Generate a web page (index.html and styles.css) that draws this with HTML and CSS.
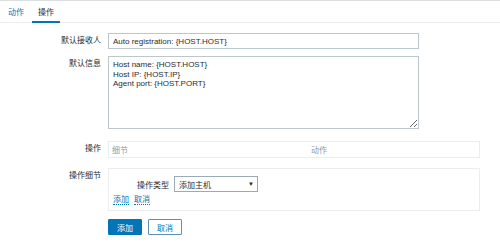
FILE: index.html
```html
<!DOCTYPE html>
<html lang="zh-CN">
<head>
  <meta charset="UTF-8" />
  <meta name="viewport" content="width=device-width, initial-scale=1.0" />
  <title>操作</title>
  <link rel="stylesheet" href="styles.css">
</head>
<body>

  <div class="tabs">
    <a class="tab">动作</a>
    <a class="tab active">操作</a>
  </div>

  <form class="form">
    <div class="row">
      <label class="row-label">默认接收人</label>
      <div class="field">
        <input class="text-input" type="text" value="Auto registration: {HOST.HOST}">
      </div>
    </div>

    <div class="row row-message">
      <label class="row-label">默认信息</label>
      <div class="field">
        <textarea class="text-area">Host name: {HOST.HOST}
Host IP: {HOST.IP}
Agent port: {HOST.PORT}</textarea>
      </div>
    </div>

    <div class="row row-ops">
      <label class="row-label label-ops">操作</label>
      <div class="field">
        <div class="ops-table">
          <span class="ops-head">细节</span>
          <span class="ops-head">动作</span>
        </div>
      </div>
    </div>

    <div class="row row-detail">
      <label class="row-label">操作细节</label>
      <div class="field">
        <div class="detail-box">
          <div class="detail-line">
            <span class="detail-label">操作类型</span>
            <div class="select">
              <span>添加主机</span>
              <span class="select-arrow">▼</span>
            </div>
          </div>
          <div class="detail-links">
            <a class="link">添加</a>
            <a class="link">取消</a>
          </div>
        </div>
      </div>
    </div>

    <div class="row row-buttons">
      <span></span>
      <div class="field buttons">
        <button type="button" class="btn btn-main">添加</button>
        <button type="button" class="btn btn-alt">取消</button>
      </div>
    </div>
  </form>

</body>
</html>
```

FILE: styles.css
```css
body {
  margin: 0;
  background: #ffffff;
  border-top: 1px solid #dcdfe1;
  font-family: "Liberation Sans", "Noto Sans CJK SC", sans-serif;
  font-size: 8px;
  color: #1f2c33;
}

.tabs {
  display: flex;
  height: 21px;
  padding-left: 8px;
  gap: 2px;
  border-bottom: 1px solid #ebeef0;
}

.tab {
  display: flex;
  align-items: center;
  padding: 0 6px;
  color: #0275b8;
  cursor: pointer;
}

.tab:first-child {
  padding-left: 0;
}

.tab.active {
  color: #1f2c33;
  border-bottom: 2px solid #0275b8;
  margin-bottom: -1px;
}

.form {
  padding-top: 10px;
}

.row {
  display: grid;
  grid-template-columns: 101px 372px;
  column-gap: 7px;
}

.row-label {
  text-align: right;
  line-height: 16px;
}

.row-message {
  margin-top: 7px;
}

.row-ops {
  margin-top: 12px;
}

.label-ops {
  line-height: 16px;
}

.row-detail {
  margin-top: 10px;
}

.row-buttons {
  margin-top: 8px;
}

.text-input,
.text-area {
  box-sizing: border-box;
  width: 311px;
  margin: 0;
  border: 1px solid #bcc7cc;
  font-family: inherit;
  font-size: 8px;
  color: #1f2c33;
  outline: none;
}

.text-input {
  display: block;
  height: 16px;
  padding: 0 4px;
}

.text-area {
  display: block;
  height: 73px;
  padding: 3px 4px;
  line-height: 9.6px;
  resize: both;
}

.ops-table {
  display: grid;
  grid-template-columns: 199px 1fr;
  height: 17px;
  box-sizing: border-box;
  border: 1px solid #ebeef0;
  align-items: center;
}

.ops-head {
  padding-left: 3px;
  color: #8a9ba4;
}

.detail-box {
  box-sizing: border-box;
  height: 43px;
  border: 1px solid #ebeef0;
  padding: 7px 4px 0;
}

.detail-line {
  display: flex;
  align-items: center;
  gap: 5px;
}

.detail-label {
  width: 56px;
  text-align: right;
}

.select {
  box-sizing: border-box;
  display: flex;
  justify-content: space-between;
  align-items: center;
  width: 84px;
  height: 16px;
  padding: 0 3px 0 4px;
  border: 1px solid #9aabb4;
}

.select-arrow {
  font-size: 6px;
}

.detail-links {
  display: flex;
  gap: 5px;
  margin-top: 3px;
}

.link {
  color: #0275b8;
  line-height: 9px;
  border-bottom: 1px dotted #0275b8;
  cursor: pointer;
}

.buttons {
  display: flex;
  gap: 6px;
}

.btn {
  box-sizing: border-box;
  height: 16px;
  width: 34px;
  padding: 0;
  font-family: inherit;
  font-size: 8px;
  border-radius: 1px;
  cursor: pointer;
}

.btn-main {
  background-color: #0275b8;
  border: 1px solid #0275b8;
  color: #ffffff;
}

.btn-alt {
  background-color: #ffffff;
  border: 1px solid #5d8fb1;
  color: #0275b8;
}
```
